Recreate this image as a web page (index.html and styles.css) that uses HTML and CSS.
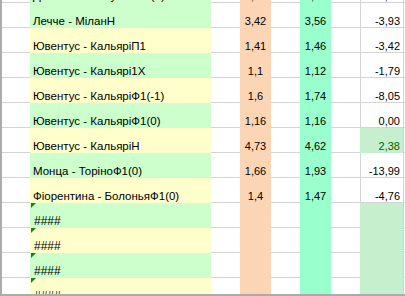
FILE: index.html
```html
<!DOCTYPE html>
<html lang="uk">
<head>
<meta charset="utf-8">
<title>Sheet</title>
<link rel="stylesheet" href="styles.css">
</head>
<body>
<div class="viewport">
  <div class="sheet">
    <div class="row">
      <div class="c a"></div><div class="c b g">Дженоа - СассуолоФ1(0)</div><div class="c w"></div><div class="c d">1,55</div><div class="c w"></div><div class="c f">1,62</div><div class="c w"></div><div class="c h">-2,17</div><div class="c i"></div>
    </div>
    <div class="row">
      <div class="c a"></div><div class="c b g">Лечче - МіланН</div><div class="c w"></div><div class="c d">3,42</div><div class="c w"></div><div class="c f">3,56</div><div class="c w"></div><div class="c h">-3,93</div><div class="c i"></div>
    </div>
    <div class="row">
      <div class="c a"></div><div class="c b y">Ювентус - КальяріП1</div><div class="c w"></div><div class="c d">1,41</div><div class="c w"></div><div class="c f">1,46</div><div class="c w"></div><div class="c h">-3,42</div><div class="c i"></div>
    </div>
    <div class="row">
      <div class="c a"></div><div class="c b g">Ювентус - Кальярі1Х</div><div class="c w"></div><div class="c d">1,1</div><div class="c w"></div><div class="c f">1,12</div><div class="c w"></div><div class="c h">-1,79</div><div class="c i"></div>
    </div>
    <div class="row">
      <div class="c a"></div><div class="c b y">Ювентус - КальяріФ1(-1)</div><div class="c w"></div><div class="c d">1,6</div><div class="c w"></div><div class="c f">1,74</div><div class="c w"></div><div class="c h">-8,05</div><div class="c i"></div>
    </div>
    <div class="row">
      <div class="c a"></div><div class="c b g">Ювентус - КальяріФ1(0)</div><div class="c w"></div><div class="c d">1,16</div><div class="c w"></div><div class="c f">1,16</div><div class="c w"></div><div class="c h">0,00</div><div class="c i"></div>
    </div>
    <div class="row">
      <div class="c a"></div><div class="c b y">Ювентус - КальяріН</div><div class="c w"></div><div class="c d">4,73</div><div class="c w"></div><div class="c f">4,62</div><div class="c w"></div><div class="c h good">2,38</div><div class="c i"></div>
    </div>
    <div class="row">
      <div class="c a"></div><div class="c b g">Монца - ТоріноФ1(0)</div><div class="c w"></div><div class="c d">1,66</div><div class="c w"></div><div class="c f">1,93</div><div class="c w"></div><div class="c h">-13,99</div><div class="c i"></div>
    </div>
    <div class="row">
      <div class="c a"></div><div class="c b y">Фіорентина - БолоньяФ1(0)</div><div class="c w"></div><div class="c d">1,4</div><div class="c w"></div><div class="c f">1,47</div><div class="c w"></div><div class="c h">-4,76</div><div class="c i"></div>
    </div>
    <div class="row">
      <div class="c a"></div><div class="c b g err">####</div><div class="c w"></div><div class="c d"></div><div class="c w"></div><div class="c f"></div><div class="c w"></div><div class="c h good"></div><div class="c i"></div>
    </div>
    <div class="row">
      <div class="c a"></div><div class="c b y err">####</div><div class="c w"></div><div class="c d"></div><div class="c w"></div><div class="c f"></div><div class="c w"></div><div class="c h good"></div><div class="c i"></div>
    </div>
    <div class="row">
      <div class="c a"></div><div class="c b g err">####</div><div class="c w"></div><div class="c d"></div><div class="c w"></div><div class="c f"></div><div class="c w"></div><div class="c h good"></div><div class="c i"></div>
    </div>
    <div class="row">
      <div class="c a"></div><div class="c b y err">####</div><div class="c w"></div><div class="c d"></div><div class="c w"></div><div class="c f"></div><div class="c w"></div><div class="c h good"></div><div class="c i"></div>
    </div>
  </div>
</div>
</body>
</html>
```
FILE: styles.css
```css
html, body {
  margin: 0;
  padding: 0;
  background: #ffffff;
}
body {
  font-family: "Liberation Sans", Arial, sans-serif;
  font-size: 11px;
  color: #000000;
}
.viewport {
  box-sizing: border-box;
  width: 405px;
  height: 296px;
  overflow: hidden;
  border-left: 2px solid #ababab;
  border-bottom: 2px solid #ababab;
}
.sheet {
  margin-top: -22px;
}
.row {
  display: grid;
  grid-template-columns: 28px 181px 29px 31px 29px 31px 29px 43px 1fr;
}
.c {
  box-sizing: border-box;
  height: 25px;
  padding-top: 12px;
  line-height: 12px;
  border-bottom: 1px solid #d4d4d4;
  white-space: nowrap;
  overflow: hidden;
}
.b {
  padding-left: 3px;
  font-size: 11.5px;
}
.g {
  background: #ccffcc;
  border-bottom-color: #ccffcc;
}
.y {
  background: #ffffcc;
  border-bottom-color: #ffffcc;
}
.d {
  background: #fcd5b4;
  border-bottom-color: #fcd5b4;
  text-align: center;
}
.f {
  background: #99ffcc;
  border-bottom-color: #99ffcc;
  text-align: center;
}
.h {
  text-align: right;
  padding-right: 3px;
  border-left: 1px solid #d4d4d4;
}
.h.good {
  background: #c6efce;
  border-left-color: #c6efce;
  border-bottom-color: #c6efce;
  color: #006100;
}
.i {
  border-left: 1px solid #d4d4d4;
}
.err {
  position: relative;
  padding-left: 4px;
  font-size: 12px;
}
.err::before {
  content: "";
  position: absolute;
  left: 1px;
  top: 0;
  width: 0;
  height: 0;
  border-top: 5px solid #1d7d1d;
  border-right: 5px solid transparent;
}
```
